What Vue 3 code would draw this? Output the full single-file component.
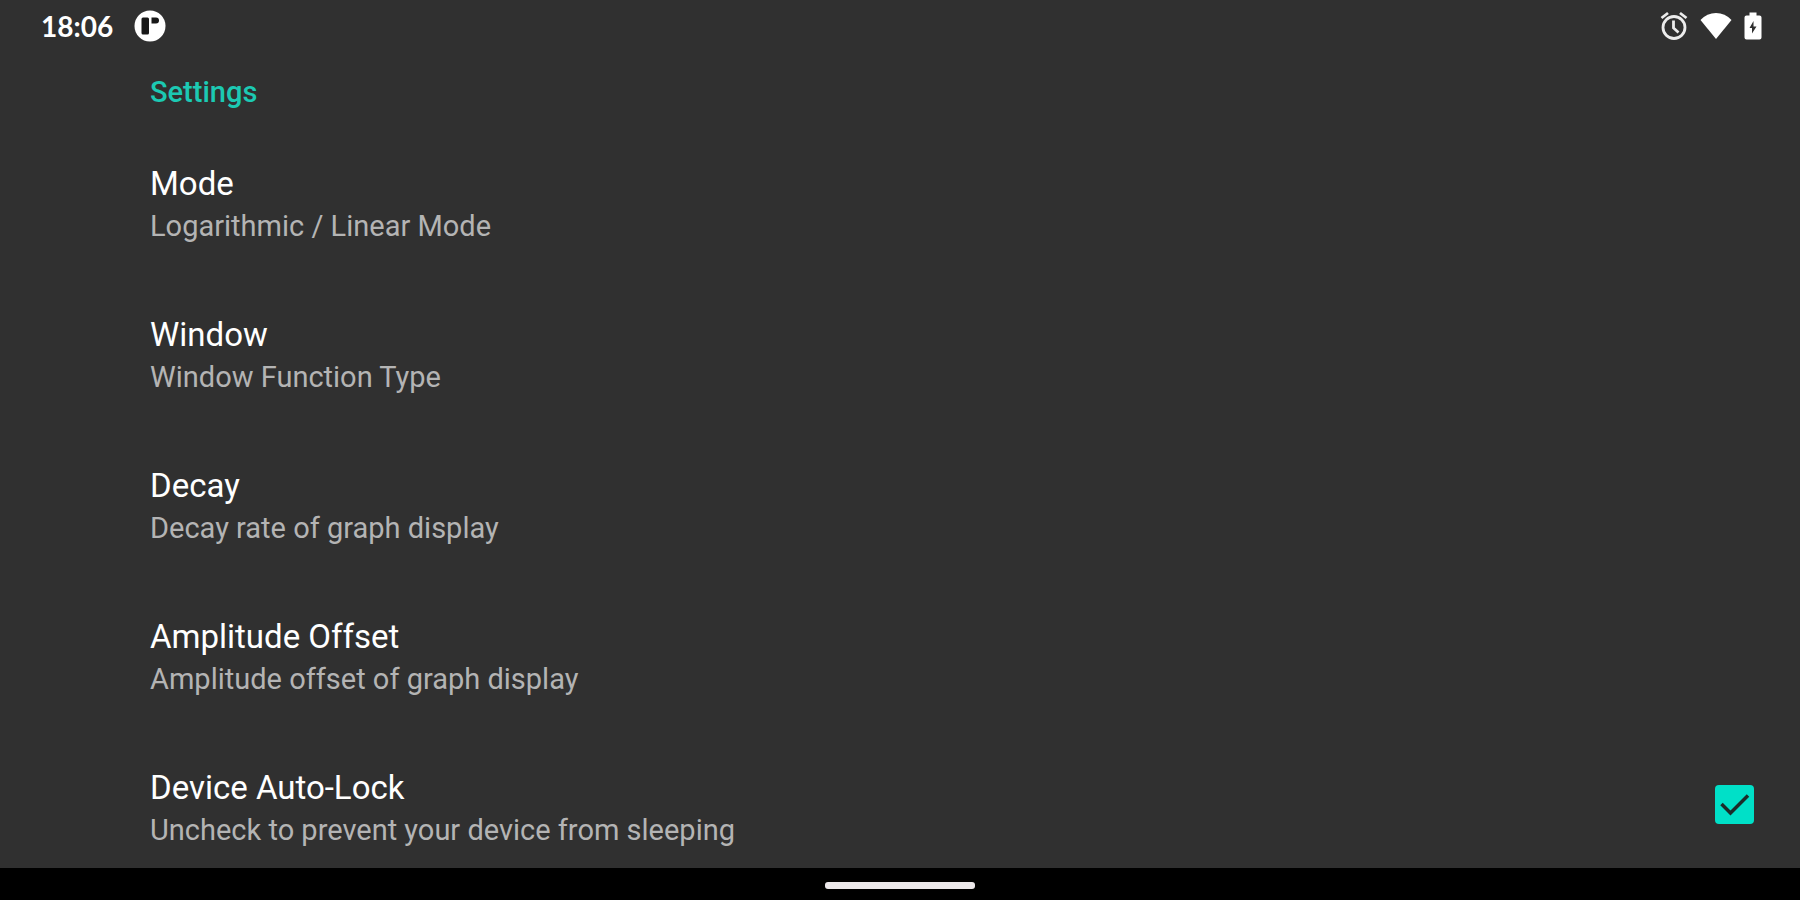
<script setup>
import { ref } from 'vue'

const items = [
  { title: 'Mode', summary: 'Logarithmic / Linear Mode' },
  { title: 'Window', summary: 'Window Function Type' },
  { title: 'Decay', summary: 'Decay rate of graph display' },
  { title: 'Amplitude Offset', summary: 'Amplitude offset of graph display' },
]
const autoLock = ref(true)
</script>

<template>
  <div class="screen">
    <header class="status">
      <div class="status-side">
        <time class="clock">18:06</time>
        <svg class="app-icon" viewBox="0 0 32 32" aria-hidden="true">
          <circle cx="16" cy="16" r="15.5" fill="#fff" />
          <rect x="7.5" y="7.5" width="7.5" height="17" rx="1.5" fill="#181818" />
          <path d="M17.5 7.5h4.5q3 0 3 3t-3 3h-4.500z" fill="#181818" />
        </svg>
      </div>
      <div class="status-side system">
        <svg class="alarm" viewBox="0 0 28 30" aria-hidden="true" fill="none" stroke="#ececec" stroke-width="2.800">
          <circle cx="14" cy="16.500" r="11" />
          <path d="M1.500 7l6.500-5M26.500 7l-6.500-5" />
          <path d="M13.500 9.500v7.500l5 4.500" />
        </svg>
        <svg class="wifi" viewBox="0 0 32 28" aria-hidden="true">
          <path d="M16 27L0.500 8Q7 1 16 1T31.500 8z" fill="#fff" />
        </svg>
        <svg class="battery" viewBox="0 0 18 28" aria-hidden="true">
          <path d="M5.500 0.500h7v3h3q2 0 2 2v20q0 2-2 2h-13q-2 0-2-2v-20q0-2 2-2h3z" fill="#fff" />
          <path d="M9.500 9l-4 7h2.500v5.500l4.500-7h-3z" fill="#303030" />
        </svg>
      </div>
    </header>

    <main class="content">
      <h1 class="category">Settings</h1>
      <ul class="list">
        <li v-for="item in items" :key="item.title">
          <button type="button" class="row">
            <span class="title">{{ item.title }}</span>
            <span class="summary">{{ item.summary }}</span>
          </button>
        </li>
        <li class="row toggle">
          <label for="auto-lock">
            <span class="title">Device Auto-Lock</span>
            <span class="summary">Uncheck to prevent your device from sleeping</span>
          </label>
          <span class="check">
            <input id="auto-lock" v-model="autoLock" type="checkbox" />
            <svg v-if="autoLock" viewBox="0 0 39 39" aria-hidden="true">
              <path d="M6.500 19l9 9L33 10.500" fill="none" stroke="#1c2c2a" stroke-width="3.500" />
            </svg>
          </span>
        </li>
      </ul>
    </main>

    <nav class="navbar" aria-label="System navigation">
      <button type="button" class="handle" aria-label="Home"></button>
    </nav>
  </div>
</template>

<style>
body {
  background: #303030;
}
</style>

<style scoped>
.screen {
  display: flex;
  flex-direction: column;
  height: 100vh;
  background: #303030;
  color: #fff;
  font-family: Roboto, "Liberation Sans", sans-serif;
}
.status {
  flex: none;
  display: flex;
  align-items: center;
  justify-content: space-between;
  height: 51px;
  padding: 0 38px 0 41px;
}
.status-side {
  display: flex;
  align-items: center;
  gap: 21px;
}
.system {
  gap: 12px;
}
.clock {
  font-family: Lato, sans-serif;
  font-weight: 700;
  font-size: 28px;
  line-height: 32px;
}
.app-icon {
  width: 32px;
  height: 32px;
}
.alarm {
  width: 28px;
  height: 30px;
}
.wifi {
  width: 32px;
  height: 28px;
}
.battery {
  width: 18px;
  height: 28px;
}
.content {
  flex: 1;
  min-height: 0;
  overflow: hidden;
}
.category {
  margin: 0;
  padding: 24px 46px 19px 150px;
  font-size: 29px;
  line-height: 35px;
  font-weight: 500;
  color: #1cc9b3;
}
.list {
  margin: 0;
  padding: 0;
  list-style: none;
}
.row {
  display: block;
  box-sizing: border-box;
  width: 100%;
  padding: 35px 46px 32px 150px;
  border: 0;
  background: none;
  color: inherit;
  font: inherit;
  text-align: left;
}
.toggle {
  display: flex;
  align-items: flex-start;
  justify-content: space-between;
}
.title,
.summary {
  display: block;
}
.title {
  font-size: 33px;
  line-height: 40px;
}
.summary {
  font-size: 29px;
  line-height: 44px;
  color: #b4b4b4;
}
.check {
  display: grid;
  width: 39px;
  height: 39px;
  margin-top: 17px;
}
.check > * {
  grid-area: 1 / 1;
}
.check input {
  appearance: none;
  width: 39px;
  height: 39px;
  margin: 0;
  border: 4px solid #b4b4b4;
  border-radius: 4px;
}
.check input:checked {
  border: 0;
  background: #00e0c8;
}
.check svg {
  pointer-events: none;
}
.navbar {
  flex: none;
  display: flex;
  justify-content: center;
  align-items: flex-start;
  box-sizing: border-box;
  height: 32px;
  padding-top: 14px;
  background: #000;
}
.handle {
  width: 150px;
  height: 7px;
  padding: 0;
  border: 0;
  border-radius: 3px;
  background: #ece8ea;
}
</style>
